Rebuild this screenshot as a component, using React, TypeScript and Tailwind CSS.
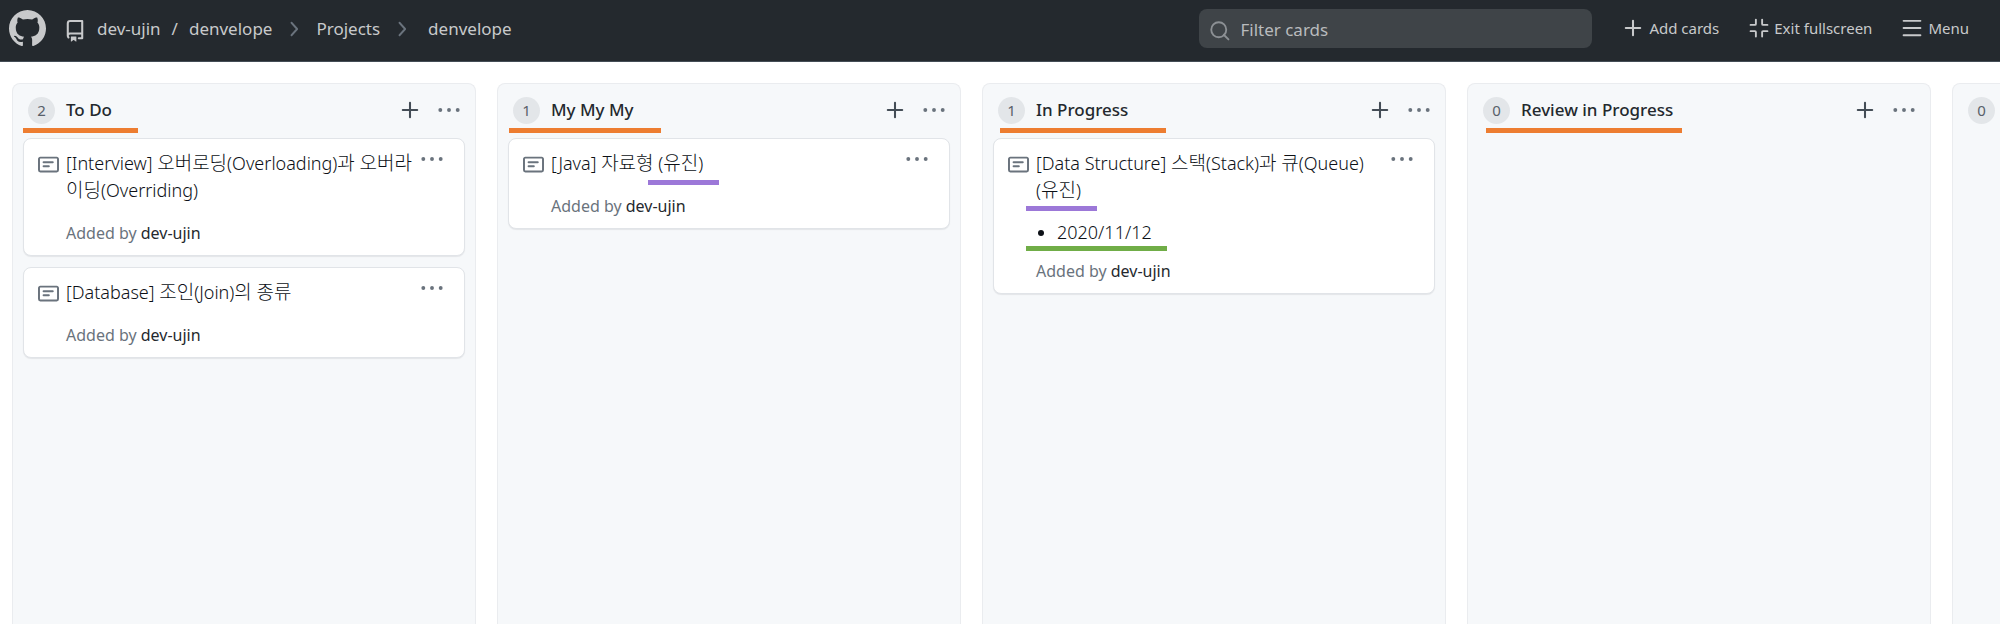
import type { ReactNode } from "react";

type IconProps = { className?: string };

const MarkGithub = ({ className = "" }: IconProps) => (
  <svg viewBox="0 0 16 16" fill="currentColor" className={className} aria-hidden="true">
    <path
      fillRule="evenodd"
      d="M8 0C3.58 0 0 3.58 0 8c0 3.54 2.29 6.53 5.47 7.59.4.07.55-.17.55-.38 0-.19-.01-.82-.01-1.49-2.01.37-2.53-.49-2.69-.94-.09-.23-.48-.94-.82-1.13-.28-.15-.68-.52-.01-.53.63-.01 1.08.58 1.23.82.72 1.21 1.87.87 2.33.66.07-.52.28-.87.51-1.07-1.78-.2-3.64-.89-3.64-3.95 0-.87.31-1.59.82-2.15-.08-.2-.36-1.02.08-2.12 0 0 .67-.21 2.2.82.64-.18 1.32-.27 2-.27.68 0 1.36.09 2 .27 1.53-1.04 2.2-.82 2.2-.82.44 1.1.16 1.92.08 2.12.51.56.82 1.27.82 2.15 0 3.07-1.87 3.75-3.65 3.95.29.25.54.73.54 1.48 0 1.07-.01 1.93-.01 2.2 0 .21.15.46.55.38A8.013 8.013 0 0016 8c0-4.42-3.58-8-8-8z"
    />
  </svg>
);

const Repo = ({ className = "" }: IconProps) => (
  <svg viewBox="0 0 16 16" fill="currentColor" className={className} aria-hidden="true">
    <path
      fillRule="evenodd"
      d="M2 2.5A2.5 2.5 0 014.5 0h8.75a.75.75 0 01.75.75v12.5a.75.75 0 01-.75.75h-2.5a.75.75 0 110-1.5h1.75v-2h-8a1 1 0 00-.714 1.7.75.75 0 01-1.072 1.05A2.495 2.495 0 012 11.5v-9zm10.5-1V9h-8c-.356 0-.694.074-1 .208V2.5a1 1 0 011-1h8zM5 12.25v3.25a.25.25 0 00.4.2l1.45-1.087a.25.25 0 01.3 0L8.6 15.7a.25.25 0 00.4-.2v-3.25a.25.25 0 00-.25-.25h-3.5a.25.25 0 00-.25.25z"
    />
  </svg>
);

const Note = ({ className = "" }: IconProps) => (
  <svg viewBox="0 0 16 16" fill="currentColor" className={className} aria-hidden="true">
    <path
      fillRule="evenodd"
      d="M0 3.75C0 2.784.784 2 1.75 2h12.5c.966 0 1.75.784 1.75 1.75v8.5A1.75 1.75 0 0114.25 14H1.75A1.75 1.75 0 010 12.25v-8.5zm1.75-.25a.25.25 0 00-.25.25v8.5c0 .138.112.25.25.25h12.5a.25.25 0 00.25-.25v-8.5a.25.25 0 00-.25-.25H1.75zM3.5 6.25a.75.75 0 01.75-.75h7a.75.75 0 010 1.5h-7a.75.75 0 01-.75-.75zm.75 2.25a.75.75 0 000 1.5h4a.75.75 0 000-1.5h-4z"
    />
  </svg>
);

const Stroke = ({ className = "", d }: IconProps & { d: string }) => (
  <svg
    viewBox="0 0 16 16"
    fill="none"
    stroke="currentColor"
    strokeWidth="1.5"
    strokeLinecap="round"
    strokeLinejoin="round"
    className={className}
    aria-hidden="true"
  >
    <path d={d} />
  </svg>
);

const PLUS = "M8 2.75v10.5M2.75 8h10.5";
const BARS = "M1.25 2.25h13.5M1.25 8h13.5M1.25 13.75h13.5";
const SHRINK =
  "M5.5 1.25v3.5a.75.75 0 01-.75.75h-3.5M10.5 1.25v3.5c0 .41.34.75.75.75h3.5M5.5 14.75v-3.5a.75.75 0 00-.75-.75h-3.5M10.5 14.75v-3.5c0-.41.34-.75.75-.75h3.5";
const CHEVRON = "M6 3l4.5 5L6 13";
const SEARCH = "M11 11l3.75 3.75M13 7A6 6 0 111 7a6 6 0 0112 0z";

const Dots = ({ label }: { label: string }) => (
  <button type="button" aria-label={label} className="flex h-5 w-6 items-center justify-center text-[#6a737d]">
    <svg viewBox="0 0 22 4" fill="currentColor" className="h-1 w-[22px]" aria-hidden="true">
      <circle cx="2.3" cy="2" r="1.95" />
      <circle cx="11" cy="2" r="1.95" />
      <circle cx="19.7" cy="2" r="1.95" />
    </svg>
  </button>
);

const Mark = ({ className }: { className: string }) => (
  <span aria-hidden="true" className={`pointer-events-none absolute h-[5px] ${className}`} />
);

/** Korean runs are set a little larger than the Latin text around them. */
const Ko = ({ children }: { children: ReactNode }) => (
  <span lang="ko" className="text-[19px] leading-none">
    {children}
  </span>
);

function Card({ title, date, mark }: { title: ReactNode; date?: ReactNode; mark?: ReactNode }) {
  return (
    <article className="relative flex rounded-lg border border-[#e1e4e8] bg-white pt-[11px] pr-5 pb-[9px] pl-[14px] shadow-[0_1px_1px_rgba(27,31,35,0.08)]">
      <Note className="mt-1 mr-[7px] h-[21px] w-[21px] shrink-0 text-[#6a737d]" />
      <div className="min-w-0 flex-1 text-[#24292e]">
        <p className="mr-4 text-[18px] leading-[27px] font-light text-[#0d1117]">{title}</p>
        {date}
        <p className={`text-[16px] leading-[26px] text-[#6a737d] ${date ? "mt-3" : "mt-4"}`}>
          Added by{" "}
          <a href="#dev-ujin" className="text-[#24292e]">
            dev-ujin
          </a>
        </p>
      </div>
      <div className="absolute top-[10px] right-5">
        <Dots label="Card options" />
      </div>
      {mark}
    </article>
  );
}

function Column({ count, name, mark, children }: { count: number; name?: string; mark?: ReactNode; children?: ReactNode }) {
  return (
    <section className="relative flex w-[464px] shrink-0 flex-col rounded-t-lg border border-b-0 border-[#eaecef] bg-[#f6f8fa] px-[10px]">
      <header className="flex h-[54px] items-center pr-1 pb-0.5 pl-[5px]">
        <span className="flex h-[27px] w-[27px] items-center justify-center rounded-full bg-[#e3e6e9] text-[15px] text-[#586069]">
          {count}
        </span>
        <h2 className="ml-[11px] flex-1 text-[17px] font-medium text-[#24292e]">{name}</h2>
        <button type="button" aria-label="Add a note" className="mr-4 text-[#444d56]">
          <Stroke d={PLUS} className="h-[22px] w-[22px]" />
        </button>
        <Dots label="Column menu" />
      </header>
      <div className="flex flex-col gap-[11px]">{children}</div>
      {mark}
    </section>
  );
}

export default function App() {
  return (
    <div className="flex min-h-screen flex-col overflow-hidden bg-white font-['Noto_Sans','Noto_Sans_CJK_KR',sans-serif]">
      <header className="flex h-[62px] items-center border-b border-[#444d56] bg-[#24292e] pr-[31px] pl-[9px] text-[#c8c9cb]">
        <a href="#home" aria-label="Homepage" className="mb-1">
          <MarkGithub className="h-[37px] w-[37px]" />
        </a>
        <nav aria-label="Breadcrumb" className="mb-1 ml-[18px] flex items-center text-[17px] whitespace-nowrap">
          <Repo className="mt-1 h-[22px] w-[22px]" />
          <a href="#dev-ujin" className="ml-[11px]">dev-ujin</a>
          <span className="mx-[11px]">/</span>
          <a href="#repo">denvelope</a>
          <Stroke d={CHEVRON} className="mx-3 h-5 w-5 text-[#6a737d]" />
          <a href="#projects">Projects</a>
          <Stroke d={CHEVRON} className="mr-4 ml-3 h-5 w-5 text-[#6a737d]" />
          <a href="#project">denvelope</a>
        </nav>
        <label className="mb-1 ml-auto flex h-[39px] w-[393px] items-center rounded-lg bg-[#3f4448] pt-0.5 pl-[11px]">
          <Stroke d={SEARCH} className="mt-0.5 h-5 w-5 shrink-0 text-[#8c9094]" />
          <input
            type="text"
            aria-label="Filter cards"
            placeholder="Filter cards"
            className="ml-[10px] min-w-0 flex-1 bg-transparent text-[17px] outline-none placeholder:text-[#b9bbbd]"
          />
        </label>
        <div className="mb-[5px] ml-[30px] flex items-center gap-[30px] text-[15px] whitespace-nowrap">
          <button type="button" className="flex items-center gap-[5px]">
            <Stroke d={PLUS} className="h-[22px] w-[22px]" />
            Add cards
          </button>
          <button type="button" className="flex items-center gap-[5px]">
            <Stroke d={SHRINK} className="h-5 w-5" />
            Exit fullscreen
          </button>
          <button type="button" className="flex items-center gap-[6px]">
            <Stroke d={BARS} className="h-5 w-5" />
            Menu
          </button>
        </div>
      </header>

      <main className="flex flex-1 gap-[21px] pt-[21px] pl-3">
        <Column count={2} name="To Do" mark={<Mark className="top-11 left-[10px] w-[115px] bg-[#ed7d31]" />}>
          <Card
            title={
              <>
                [Interview] <Ko>오버로딩</Ko>(Overloading)<Ko>과</Ko> <Ko>오버라이딩</Ko>(Overriding)
              </>
            }
          />
          <Card
            title={
              <>
                [Database] <Ko>조인</Ko>(Join)<Ko>의</Ko> <Ko>종류</Ko>
              </>
            }
          />
        </Column>
        <Column count={1} name="My My My" mark={<Mark className="top-11 left-[11px] w-[152px] bg-[#ed7d31]" />}>
          <Card
            title={
              <>
                [Java] <Ko>자료형</Ko> (<Ko>유진</Ko>)
              </>
            }
            mark={<Mark className="top-[41px] left-[139px] w-[71px] bg-[#9c78d8]" />}
          />
        </Column>
        <Column count={1} name="In Progress" mark={<Mark className="top-11 left-[17px] w-[166px] bg-[#ed7d31]" />}>
          <Card
            title={
              <>
                [Data Structure] <Ko>스택</Ko>(Stack)<Ko>과</Ko> <Ko>큐</Ko>(Queue){" "}
                <span className="whitespace-nowrap">
                  (<Ko>유진</Ko>)
                </span>
              </>
            }
            date={
              <ul className="mt-[15px] list-disc pl-[21px] text-[18px] leading-[27px] font-light text-[#0d1117]">
                <li>2020/11/12</li>
              </ul>
            }
            mark={
              <>
                <Mark className="top-[67px] left-8 w-[71px] bg-[#9c78d8]" />
                <Mark className="top-[107px] left-8 w-[141px] bg-[#70ad47]" />
              </>
            }
          />
        </Column>
        <Column
          count={0}
          name="Review in Progress"
          mark={<Mark className="top-11 left-[18px] w-[196px] bg-[#ed7d31]" />}
        />
        <Column count={0} />
      </main>
    </div>
  );
}
